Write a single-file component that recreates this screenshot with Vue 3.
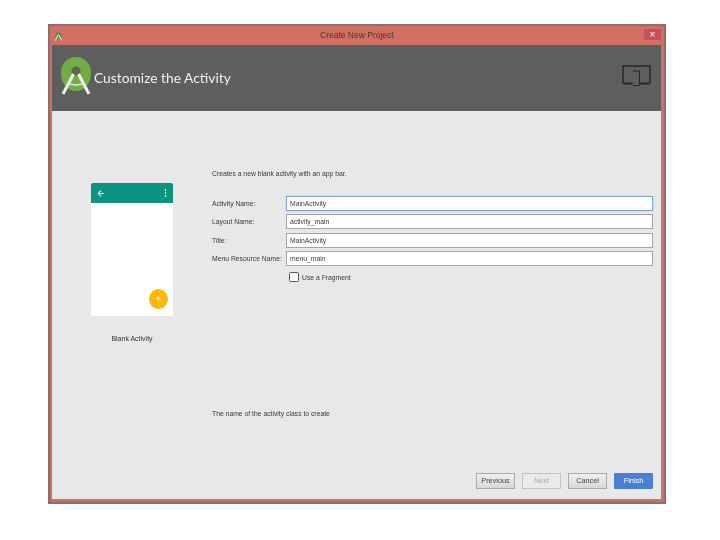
<script setup>
const fields = [
  { label: 'Activity Name:', value: 'MainActivity', focus: true },
  { label: 'Layout Name:', value: 'activity_main' },
  { label: 'Title:', value: 'MainActivity' },
  { label: 'Menu Resource Name:', value: 'menu_main' },
]
const buttons = [
  { text: 'Previous', cls: 'grey' },
  { text: 'Next', cls: 'off' },
  { text: 'Cancel', cls: 'grey' },
  { text: 'Finish', cls: 'blue' },
]
</script>

<template>
  <div class="page">
    <div class="window">
      <div class="titlebar">
        <svg class="mini" viewBox="0 0 10 10">
          <circle cx="5" cy="4.5" r="4" fill="#5f9440" />
          <circle cx="5" cy="3" r="1.4" fill="#3d4a35" />
          <path d="M5 2.5 L1.5 9.5 M5 2.5 L8.5 9.5" stroke="#f2f2f2" stroke-width="1.1" fill="none" />
        </svg>
        <span class="wintitle">Create New Project</span>
        <span class="close">×</span>
      </div>
      <div class="header">
        <svg class="logo" viewBox="0 0 32 40">
          <path d="M16 1 C25 1 31 8 31 17 C31 27 25 35 16 35 C7 35 1 27 1 17 C1 8 7 1 16 1 Z" fill="#73ad46" />
          <circle cx="16" cy="15" r="4.5" fill="#5a6650" />
          <path d="M13.5 18 L3 38 M18.5 18 L29 38" stroke="#eef2ea" stroke-width="3" fill="none" />
          <path d="M8 27 Q16 31 24 27" stroke="#dfe8d6" stroke-width="1.6" fill="none" />
        </svg>
        <h1 class="heading">Customize the Activity</h1>
        <svg class="devices" viewBox="0 0 29 21" fill="none" stroke="#262626">
          <path d="M1 18.5 V1 H28 V18.5" stroke-width="1.4" />
          <path d="M1 18.5 H11 M18 18.5 H28" stroke-width="2" />
          <path d="M11 6 H17.5 V20.5 H11" stroke-width="1" />
        </svg>
      </div>
      <div class="body">
        <div class="preview">
          <div class="phone">
            <div class="appbar">
              <svg class="back" viewBox="0 0 10 10" fill="none" stroke="#fff" stroke-width="1.3">
                <path d="M9 5 H1.5 M5 1.5 L1.5 5 L5 8.5" />
              </svg>
              <div class="dots"><i></i><i></i><i></i></div>
            </div>
            <div class="fab">+</div>
          </div>
          <div class="caption">Blank Activity</div>
        </div>
        <div class="form">
          <p class="intro">Creates a new blank activity with an app bar.</p>
          <div class="fields">
            <div v-for="f in fields" :key="f.label" class="row">
              <label class="lab">{{ f.label }}</label>
              <div class="input" :class="{ focus: f.focus }"><span class="val">{{ f.value }}</span></div>
            </div>
            <div class="check">
              <span class="box"></span>
              <span class="soft">Use a Fragment</span>
            </div>
          </div>
          <p class="hint">The name of the activity class to create</p>
        </div>
      </div>
      <div class="footer">
        <div v-for="b in buttons" :key="b.text" class="btn" :class="b.cls"><span class="soft">{{ b.text }}</span></div>
      </div>
    </div>
  </div>
</template>

<style>
html, body { margin: 0; background: #fff; }
</style>

<style scoped>
.page {
  width: 720px;
  height: 540px;
  padding: 24px 0 0 48px;
  box-sizing: border-box;
  font-family: "Liberation Sans", Arial, sans-serif;
  overflow: hidden;
}
.window {
  width: 618px;
  height: 480px;
  box-sizing: border-box;
  border: 2px solid #8b716d;
  background: #d26f63;
  padding: 0 3px 3px 2px;
  display: flex;
  flex-direction: column;
}
.titlebar {
  height: 19px;
  flex: none;
  display: flex;
  align-items: center;
  position: relative;
  color: #4a3632;
  padding-left: 2px;
}
.mini { width: 9px; height: 9px; margin-top: 1px; }
.wintitle {
  position: absolute;
  left: 268px;
  top: 4px;
  font-size: 8.5px;
  line-height: 11px;
  filter: blur(0.4px);
}
.close {
  position: absolute;
  right: 0;
  top: 3px;
  width: 17px;
  height: 11px;
  background: #c8505a;
  color: #fff;
  font-size: 10px;
  line-height: 11px;
  text-align: center;
}
.header {
  height: 66px;
  flex: none;
  background: #5e5e5e;
  display: flex;
  align-items: center;
  padding: 0 10px 0 8px;
  color: #fff;
}
.logo { width: 32px; height: 40px; margin: -5px 2px 0 0; }
.heading {
  font-family: Lato, sans-serif;
  font-size: 13.8px;
  font-weight: 400;
  margin: -2px 0 0 0;
  color: #f0f0f0;
  filter: blur(0.35px);
  white-space: nowrap;
}
.devices { width: 29px; height: 21px; margin: -5px 0 0 auto; }
.body {
  flex: 1;
  background: #e8e8e8;
  display: flex;
  min-height: 0;
}
.preview {
  width: 160px;
  flex: none;
  padding: 72px 0 0 39px;
  box-sizing: border-box;
}
.phone {
  width: 82px;
  height: 133px;
  background: #fff;
  border-radius: 2px;
  position: relative;
  box-shadow: 0 0 1px #e0e0e0;
}
.appbar {
  height: 20px;
  background: #0b9580;
  border-radius: 2px 2px 0 0;
  display: flex;
  align-items: center;
  justify-content: space-between;
  padding: 0 7px 0 6px;
}
.back { width: 8px; height: 9px; }
.dots { display: flex; flex-direction: column; gap: 1px; }
.dots i { width: 1.5px; height: 2px; background: #dff; display: block; }
.fab {
  position: absolute;
  right: 5px;
  bottom: 7px;
  width: 19px;
  height: 20px;
  border-radius: 50%;
  background: #fbb908;
  color: #fff;
  font-size: 9px;
  line-height: 20px;
  text-align: center;
}
.caption {
  width: 82px;
  margin-top: 18px;
  text-align: center;
  font-size: 7px;
  line-height: 10px;
  color: #333;
  filter: blur(0.45px);
}
.form {
  flex: 1;
  font-size: 6.8px;
  color: #3a3a3a;
  min-width: 0;
  display: flex;
  flex-direction: column;
}
.intro {
  margin: 58px 0 0;
  line-height: 10px;
  filter: blur(0.45px);
}
.fields {
  margin-top: 17px;
  display: flex;
  flex-direction: column;
  gap: 3.35px;
}
.row {
  display: flex;
  align-items: center;
  height: 15px;
}
.lab {
  width: 74px;
  flex: none;
  white-space: nowrap;
  filter: blur(0.45px);
}
.input {
  width: 367px;
  height: 15px;
  box-sizing: border-box;
  background: #fff;
  border: 1px solid #a4a4a4;
  padding: 0 3px;
  line-height: 13px;
  color: #3a3a3a;
}
.val { display: inline-block; filter: blur(0.45px); }
.soft { display: inline-block; filter: blur(0.45px); }
.input.focus {
  border-color: #7ea6d8;
  box-shadow: 0 0 1px #7ea6d8;
}
.check {
  display: flex;
  align-items: center;
  gap: 3px;
  height: 10px;
  margin: 3px 0 0 77px;
}
.box {
  width: 8px;
  height: 8px;
  background: #fff;
  border: 1px solid #555;
  border-radius: 1.5px;
}
.hint {
  margin: 127px 0 0;
  line-height: 10px;
  filter: blur(0.45px);
}
.footer {
  height: 26px;
  flex: none;
  margin-top: -26px;
  display: flex;
  justify-content: flex-end;
  gap: 7px;
  padding: 0 8px 0 0;
  position: relative;
  font-size: 7.3px;
}
.btn {
  width: 39px;
  height: 16px;
  box-sizing: border-box;
  text-align: center;
  line-height: 14px;
  border: 1px solid #aaa;
  color: #444;
}
.btn.grey { background: linear-gradient(#f0f0f0, #d8d8d8); }
.btn.off { background: #eaeaea; color: #a8a8a8; border-color: #c4c4c4; }
.btn.blue { background: #4a80d4; border-color: #4a80d4; color: #fff; border-radius: 1px; }
</style>
